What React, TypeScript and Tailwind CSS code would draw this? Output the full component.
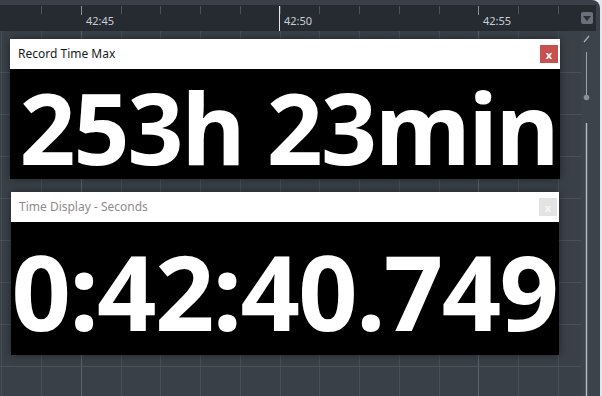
import React from "react";

// timeline grid: minor lines every ~39.75px, major every 5th
const TICKS = Array.from({ length: 15 }, (_, i) => Math.round(1.25 + 39.75 * i));
const MAJOR = [81, 279, 478];
const ROWS = [72, 114, 156, 198, 240, 282, 324, 366];

function Ruler() {
  return (
    <div className="relative h-[26px] flex-1 bg-[#262b32]">
      <svg className="absolute inset-0" width="596" height="26">
        {TICKS.filter((x) => x > 10).map((x) =>
          x === 279 ? null : (
            <line
              key={x}
              x1={x + 0.5}
              x2={x + 0.5}
              y1={1}
              y2={MAJOR.includes(x) ? 10 : 9}
              stroke={MAJOR.includes(x) ? "#8c929a" : "#4d545d"}
              strokeWidth={1}
            />
          )
        )}
        <line x1={279.5} x2={279.5} y1={1} y2={26} stroke="#e6e8ea" strokeWidth={1} />
      </svg>
      <span className="absolute left-[86px] top-[10px] text-[11px] leading-none text-[#c9cdd3]">42:45</span>
      <span className="absolute left-[284px] top-[10px] text-[11px] leading-none text-[#c9cdd3]">42:50</span>
      <span className="absolute left-[483px] top-[10px] text-[11px] leading-none text-[#c9cdd3]">42:55</span>
      <div className="absolute left-[581px] top-[7px] flex h-[12px] w-[12px] items-center justify-center rounded-[2px] bg-[#6a7079]">
        <svg width="8" height="5" viewBox="0 0 8 5">
          <path d="M0 0 H8 L4 5 Z" fill="#2a2e35" />
        </svg>
      </div>
    </div>
  );
}

function Grid() {
  return (
    <svg className="absolute inset-0" width="581" height="365">
      {TICKS.map((x) => (
        <line
          key={x}
          x1={x + 0.5}
          x2={x + 0.5}
          y1={0}
          y2={365}
          stroke={MAJOR.includes(x) ? "#58606a" : "#474e57"}
          strokeWidth={1}
        />
      ))}
      {ROWS.map((y) => (
        <line key={y} x1={0} x2={581} y1={y - 31 + 0.5} y2={y - 31 + 0.5} stroke="#4a515a" strokeWidth={1} />
      ))}
    </svg>
  );
}

function TimeWindow({
  title,
  active,
  text,
  className,
  bodyClass,
  textClass,
}: {
  title: string;
  active: boolean;
  text: string;
  className: string;
  bodyClass: string;
  textClass: string;
}) {
  return (
    <div className={`absolute flex flex-col shadow-[0_0_8px_rgba(0,0,0,0.45)] ${className}`}>
      <div className="flex h-[30px] items-center justify-between bg-white pl-[8px] pr-[2px]">
        <span className={`text-[12px] ${active ? "text-[#1a1a1a]" : "text-[#8e8a8c]"}`}>{title}</span>
        <div
          className={`flex h-[18px] w-[18px] items-center justify-center text-[11px] font-bold leading-none ${
            active ? "bg-[#c8504f] text-white" : "bg-[#e3e3e3] text-[#f6f6f6]"
          }`}
        >
          x
        </div>
      </div>
      <div className={`flex items-center justify-center overflow-hidden bg-black ${bodyClass}`}>
        <span className={`whitespace-nowrap font-bold leading-[0.8] text-white ${textClass}`}>{text}</span>
      </div>
    </div>
  );
}

export default function App() {
  return (
    <div className="h-[396px] w-[602px] overflow-hidden bg-[#e2e8f1] font-['Noto_Sans','Open_Sans',sans-serif]">
      <div className="flex h-full w-[600px] flex-col rounded-tr-[8px] bg-[#3b4048] pt-[5px]">
        <div className="flex pr-[4px]">
          <Ruler />
        </div>
        <div className="flex flex-1">
          <div className="relative w-[581px] bg-[#3a4048]">
            <Grid />
            <TimeWindow
              title="Record Time Max"
              active
              text="253h 23min"
              className="left-[10px] top-[8px] w-[550px]"
              bodyClass="h-[110px] pt-[7px] pl-[7px]"
              textClass="text-[98px] tracking-[-2px]"
            />
            <TimeWindow
              title="Time Display - Seconds"
              active={false}
              text="0:42:40.749"
              className="left-[11px] top-[161px] w-[548px]"
              bodyClass="h-[133px] pt-[5px] pr-[1px]"
              textClass="text-[104px] tracking-[-1.6px]"
            />
          </div>
          <div className="relative flex-1 bg-[#3d434b]">
            <svg className="absolute inset-0" width="19" height="365">
              <line x1={3} y1={11} x2={8} y2={5} stroke="#a9aeb5" strokeWidth={1.2} />
              <line x1={5.5} x2={5.5} y1={21} y2={64} stroke="#9ea3aa" strokeWidth={1} />
              <circle cx={5.5} cy={66.5} r={2.8} fill="#8a9098" />
              <line x1={5.5} x2={5.5} y1={92} y2={365} stroke="#b8bcc1" strokeWidth={1.4} />
            </svg>
          </div>
        </div>
      </div>
    </div>
  );
}
